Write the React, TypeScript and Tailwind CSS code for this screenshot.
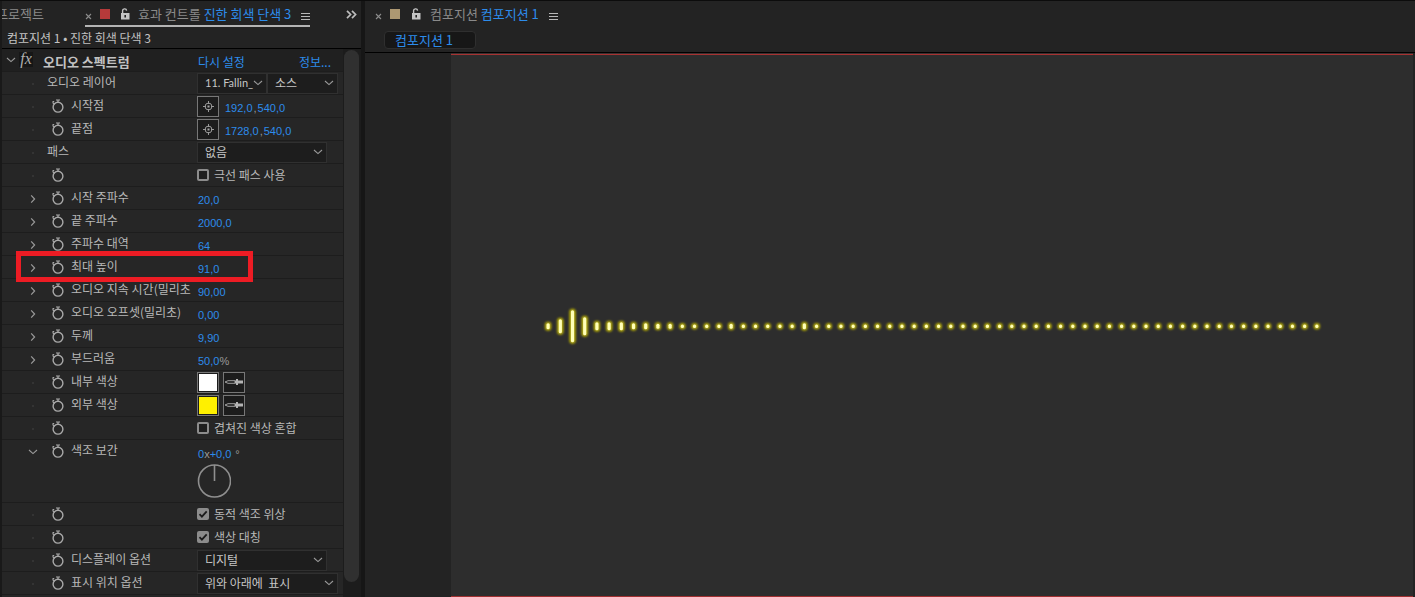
import { useId, useState, type ReactNode } from "react";

function Lock() {
  return (
    <svg viewBox="0 0 10 12" className="h-3 w-2.5" aria-hidden="true">
      <path d="M2.6 5.5V3.2A2 2 0 0 1 6.6 2.6" fill="none" stroke="#c4c4c4" strokeWidth="1.4" />
      <path fillRule="evenodd" d="M1 5h8.500v6.500H1zM4.400 7v2.600h1.600V7z" fill="#c4c4c4" />
    </svg>
  );
}

function MenuLines() {
  return (
    <svg viewBox="0 0 9 9" className="h-[9px] w-[9px]" aria-hidden="true">
      <path d="M0 1.5h9M0 4.5h9M0 7.5h9" stroke="#b8b8b8" />
    </svg>
  );
}

function Cross() {
  return (
    <svg viewBox="0 0 7 7" className="h-[7px] w-[7px]" aria-hidden="true">
      <path d="M1 1l5 5M6 1L1 6" stroke="#8c8c8c" strokeWidth="1.1" />
    </svg>
  );
}

function Stopwatch() {
  return (
    <svg viewBox="0 0 12 14" className="h-3.5 w-3" aria-hidden="true">
      <circle cx="6" cy="8.2" r="4.9" fill="none" stroke="#a9a9a9" strokeWidth="1.4" />
      <path d="M4 1h4M6 1v2.300" fill="none" stroke="#a9a9a9" strokeWidth="1.200" />
      <path d="M.6 2.500h1.600M1 2.500v1.500l1.500 1.200" fill="none" stroke="#a9a9a9" strokeWidth="1.100" />
    </svg>
  );
}

function Down({ className = "" }: { className?: string }) {
  return (
    <svg viewBox="0 0 10 6" className={`h-1.5 w-2.5 ${className}`} aria-hidden="true">
      <path d="M1 1l4 3.6L9 1" fill="none" stroke="#9a9a9a" strokeWidth="1.1" />
    </svg>
  );
}

function Right() {
  return (
    <svg viewBox="0 0 6 10" className="h-2.5 w-1.5" aria-hidden="true">
      <path d="M1.2 1.4L4.6 5L1.2 8.6" fill="none" stroke="#9a9a9a" strokeWidth="1.2" />
    </svg>
  );
}

function Target() {
  return (
    <svg viewBox="0 0 13 13" className="h-[13px] w-[13px]" aria-hidden="true">
      <circle cx="6.5" cy="6.5" r="3.4" fill="none" stroke="#9a9a9a" />
      <path d="M6.5 1v3M6.5 9v3M1 6.5h3M9 6.5h3" stroke="#9a9a9a" />
      <rect x="5.5" y="5.5" width="2" height="2" fill="#a8a8a8" />
    </svg>
  );
}

function Dropper() {
  return (
    <svg viewBox="0 0 20 8" className="h-2 w-5" aria-hidden="true">
      <path d="M1 4l3-1.300h7v2.600H4z" fill="#1c1c1c" stroke="#a0a0a0" />
      <path d="M11 2.500h1V1h2v1.500h5v3h-5V7h-2V5.500h-1z" fill="#b4b4b4" />
    </svg>
  );
}

function Picker({ label, options, className }: { label: string; options: string[]; className: string }) {
  return (
    <span className={`grid h-[21px] items-center ${className}`}>
      <select
        aria-label={label}
        className="col-start-1 row-start-1 h-full w-full appearance-none overflow-hidden border border-[#303030] bg-[#1d1d1d] pl-[7px] pr-3 text-[#c6c6c6] outline-none"
      >
        {options.map((o) => (
          <option key={o}>{o}</option>
        ))}
      </select>
      <Down className="pointer-events-none col-start-1 row-start-1 mr-1 justify-self-end" />
    </span>
  );
}

function Value({ children }: { children: ReactNode }) {
  return <button className="text-[#2d8ceb]">{children}</button>;
}

function Numbers({ children }: { children: ReactNode }) {
  return (
    <span className="flex pt-1 font-['Liberation_Sans',sans-serif] text-[11px] leading-4 text-[#9a9a9a]">{children}</span>
  );
}

function Check({ label, on = false }: { label: string; on?: boolean }) {
  const id = useId();
  const [checked, setChecked] = useState(on);
  return (
    <span className="flex items-center gap-[5px]">
      <span className="grid">
        <input
          id={id}
          type="checkbox"
          checked={checked}
          onChange={() => setChecked(!checked)}
          className="col-start-1 row-start-1 size-3 appearance-none rounded-xs border-2 border-[#8c8c8c] bg-[#1f1f1f] checked:bg-[#8c8c8c]"
        />
        {checked && (
          <svg viewBox="0 0 12 12" className="pointer-events-none col-start-1 row-start-1 size-3" aria-hidden="true">
            <path d="M2.500 6.200l2.400 2.500L9.700 3.300" fill="none" stroke="#1c1c1c" strokeWidth="1.800" />
          </svg>
        )}
      </span>
      <label htmlFor={id}>{label}</label>
    </span>
  );
}

function ColorPair({ name, swatch }: { name: string; swatch: string }) {
  return (
    <span className="flex gap-1">
      <button aria-label={name} className="h-[21px] w-[22px] border border-[#777] bg-[#1c1c1c] p-px">
        <span className={`block h-full ${swatch}`} />
      </button>
      <button
        aria-label={`${name} 스포이드`}
        className="flex h-[21px] w-[22px] items-center justify-center border border-[#777] bg-[#1c1c1c]"
      >
        <Dropper />
      </button>
    </span>
  );
}

type RowProps = {
  name?: string;
  twirl?: "open" | "closed";
  watch?: boolean;
  marked?: boolean;
  children: ReactNode;
};

function Row({ name, twirl, watch = true, marked = false, children }: RowProps) {
  return (
    <li className="relative flex border-b border-[#1d1d1d]">
      <div className="flex h-[22px] w-[195px] shrink-0 items-center overflow-hidden pl-5">
        <span className="flex w-6 shrink-0 justify-center pr-[3px] pt-0.5">
          {twirl === "closed" && (
            <button aria-label={`${name} 펼치기`}>
              <Right />
            </button>
          )}
          {twirl === "open" && (
            <button aria-label={`${name} 접기`}>
              <Down />
            </button>
          )}
          {!twirl && <span className="size-0.5 bg-[#343434]" />}
        </span>
        {watch && (
          <button aria-label="스톱워치" className="flex w-6 shrink-0 justify-center pr-px">
            <Stopwatch />
          </button>
        )}
        <span className="whitespace-nowrap pb-0.5 pl-px">{name}</span>
      </div>
      <div className="flex min-h-[22px] flex-1 items-center">{children}</div>
      {marked && <span className="pointer-events-none absolute -bottom-1 -top-[5px] left-3.5 w-[237px] border-[5px] border-[#ed1c24]" />}
    </li>
  );
}

function Point({ name, x, y }: { name: string; x: string; y: string }) {
  return (
    <Row name={name}>
      <button
        aria-label={`${name} 지정`}
        className="mr-1.5 flex h-[21px] w-[22px] items-center justify-center border border-[#777] bg-[#1c1c1c]"
      >
        <Target />
      </button>
      <Numbers>
        <Value>{x}</Value>
        <span className="px-px">,</span>
        <Value>{y}</Value>
      </Numbers>
    </Row>
  );
}

function Slider({ name, value, unit, marked }: { name: string; value: string; unit?: string; marked?: boolean }) {
  return (
    <Row name={name} twirl="closed" marked={marked}>
      <span className="pl-px">
        <Numbers>
          <Value>{value}</Value>
          {unit}
        </Numbers>
      </span>
    </Row>
  );
}

function EffectControls() {
  return (
    <section className="flex w-[361px] shrink-0 flex-col border-l-2 border-[#191919] bg-[#232323]">
      <header className="flex h-[26px] items-stretch text-[13px]">
        <button className="flex w-[42px] items-center justify-end overflow-hidden whitespace-nowrap text-[#8a8a8a]">
          프로젝트
        </button>
        <div className="ml-[41px] flex items-center whitespace-nowrap border-b-2 border-[#b4b4b4] pt-0.5">
          <button aria-label="닫기" className="pt-1">
            <Cross />
          </button>
          <span className="ml-2 size-2.5 bg-[#b53a3a]" />
          <button aria-label="잠금" className="ml-2.5">
            <Lock />
          </button>
          <h2 className="ml-2 text-[#8a8a8a]">
            효과 컨트롤 <span className="text-[#2d8ceb]">진한 회색 단색 3</span>
          </h2>
          <button aria-label="패널 메뉴" className="ml-2.5 pt-1">
            <MenuLines />
          </button>
        </div>
        <button aria-label="패널 더 보기" className="ml-auto mr-1">
          <svg viewBox="0 0 11 9" className="h-[9px] w-[11px]" aria-hidden="true">
            <path d="M1 .8l3.600 3.700L1 8.200M6 .8l3.600 3.700L6 8.200" fill="none" stroke="#bcbcbc" strokeWidth="1.700" />
          </svg>
        </button>
      </header>
      <p className="flex h-[22px] items-center border-b border-black pl-[5px] pt-px text-[#c2c2c2]">
        컴포지션 1 • 진한 회색 단색 3
      </p>
      <div className="flex flex-1">
        <div className="min-w-0 flex-1 bg-[#262626]">
          <div className="flex h-[23px] items-center border-b border-[#1d1d1d] bg-[#202020] pt-1">
            <div className="flex w-[196px] items-center">
              <button aria-label="접기" className="ml-1 pb-1">
                <Down />
              </button>
              <button
                aria-label="효과 사용"
                className="mb-1.5 ml-[3px] flex h-[15px] w-3.5 items-center justify-center bg-[#161616] font-['Liberation_Serif',serif] text-base italic text-[#b0b0b0]"
              >
                fx
              </button>
              <h3 className="ml-2.5 text-[13px] font-bold text-[#c2c2c2]">오디오 스펙트럼</h3>
            </div>
            <button className="text-[#2d8ceb]">다시 설정</button>
            <button className="ml-auto mr-3 text-[#2d8ceb]">정보...</button>
          </div>
          <ul className="leading-4">
            <Row name="오디오 레이어" watch={false}>
              <Picker
                label="오디오 레이어"
                options={["11. Fallin_"]}
                className="w-[70px] font-['Lato','Noto_Sans_CJK_KR',sans-serif] text-[11px]"
              />
              <Picker label="소스" options={["소스"]} className="w-[71px]" />
            </Row>
            <Point name="시작점" x="192,0" y="540,0" />
            <Point name="끝점" x="1728,0" y="540,0" />
            <Row name="패스" watch={false}>
              <Picker label="패스" options={["없음"]} className="w-[130px]" />
            </Row>
            <Row>
              <Check label="극선 패스 사용" />
            </Row>
            <Slider name="시작 주파수" value="20,0" />
            <Slider name="끝 주파수" value="2000,0" />
            <Slider name="주파수 대역" value="64" />
            <Slider name="최대 높이" value="91,0" marked />
            <Slider name="오디오 지속 시간(밀리초" value="90,00" />
            <Slider name="오디오 오프셋(밀리초)" value="0,00" />
            <Slider name="두께" value="9,90" />
            <Slider name="부드러움" value="50,0" unit="%" />
            <Row name="내부 색상">
              <ColorPair name="내부 색상" swatch="bg-white" />
            </Row>
            <Row name="외부 색상">
              <ColorPair name="외부 색상" swatch="bg-[#fff000]" />
            </Row>
            <Row>
              <Check label="겹쳐진 색상 혼합" />
            </Row>
            <Row name="색조 보간" twirl="open">
              <div className="flex flex-col pb-1">
                <span className="flex h-6 items-center pl-px">
                  <Numbers>
                    <Value>0</Value>x<Value>+0,0</Value>
                    <span className="pl-1">°</span>
                  </Numbers>
                </span>
                <svg viewBox="0 0 34 34" className="size-[34px]" role="img" aria-label="색조 각도">
                  <circle cx="17.500" cy="17" r="16" fill="none" stroke="#8f8f8f" strokeWidth="1.600" />
                  <path d="M17.500 1v16" stroke="#8f8f8f" strokeWidth="1.600" />
                </svg>
              </div>
            </Row>
            <Row>
              <Check label="동적 색조 위상" on />
            </Row>
            <Row>
              <Check label="색상 대칭" on />
            </Row>
            <Row name="디스플레이 옵션">
              <Picker label="디스플레이 옵션" options={["디지털"]} className="w-[130px]" />
            </Row>
            <Row name="표시 위치 옵션">
              <Picker label="표시 위치 옵션" options={["위와 아래에\u00a0 표시"]} className="w-[141px]" />
            </Row>
          </ul>
        </div>
        <div className="w-[18px] bg-[#1c1c1c] pb-[15px] pl-px pr-0.5 pt-px">
          <div className="h-full rounded-full bg-[#303030]" />
        </div>
      </div>
    </section>
  );
}

const bandCount = 64;
const tallBands: Record<number, number> = { 0: 9, 1: 17, 2: 35, 3: 21, 4: 11, 5: 11, 6: 11, 7: 9, 8: 9, 9: 8, 10: 8, 15: 8, 21: 9 };

function Spectrum() {
  return (
    <svg viewBox="0 0 961 540" className="h-full w-full" role="img" aria-label="오디오 스펙트럼">
      <defs>
        <filter id="halo" filterUnits="userSpaceOnUse" x="0" y="200" width="961" height="140">
          <feGaussianBlur stdDeviation="0.9" />
        </filter>
        <filter id="core" filterUnits="userSpaceOnUse" x="0" y="200" width="961" height="140">
          <feGaussianBlur stdDeviation="0.6" />
        </filter>
      </defs>
      {[
        { color: "#b8ae08", w: 6.4, grow: 0, filter: "url(#halo)" },
        { color: "#ffffb8", w: 3.2, grow: -3, filter: "url(#core)" },
      ].map((layer) => (
        <g key={layer.color} fill={layer.color} filter={layer.filter}>
          {Array.from({ length: bandCount }, (_, i) => {
            const h = (tallBands[i] ?? 6.6) + layer.grow;
            return (
              <rect
                key={i}
                x={97 + i * 12.19 - layer.w / 2}
                y={271 - h / 2}
                width={layer.w}
                height={h}
                rx={Math.min(layer.w, h) / 2}
              />
            );
          })}
        </g>
      ))}
    </svg>
  );
}

function Composition() {
  return (
    <section className="flex min-w-0 flex-1 flex-col bg-[#232323]">
      <header className="flex h-[26px] items-center whitespace-nowrap pl-2.5 text-[13px]">
        <button aria-label="닫기" className="pt-1">
          <Cross />
        </button>
        <span className="ml-2 size-2.5 bg-[#ad9872]" />
        <button aria-label="잠금" className="ml-[11px]">
          <Lock />
        </button>
        <h2 className="ml-[9px] text-[#8a8a8a]">
          컴포지션 <span className="text-[#2d8ceb]">컴포지션 1</span>
        </h2>
        <button aria-label="패널 메뉴" className="ml-2.5 pt-1">
          <MenuLines />
        </button>
      </header>
      <nav className="flex h-[26px] items-start border-b border-black pl-[19px] pt-1 text-[13px]">
        <a
          href="#comp"
          className="flex h-[18px] w-[92px] items-center rounded-sm border border-[#2f2f2f] bg-[#171717] pb-px pl-2.5 text-[#2d8ceb]"
        >
          컴포지션 1
        </a>
      </nav>
      <main className="flex min-h-0 flex-1 pl-[86px] pr-0.5">
        <div className="flex min-w-0 flex-1 flex-col bg-[#2d2d2d]">
          <div className="h-px bg-[#3a3030]" />
          <div className="h-px bg-[#a83232]" />
          <div className="min-h-0 flex-1">
            <Spectrum />
          </div>
          <div className="h-px bg-[#a03030]" />
        </div>
      </main>
    </section>
  );
}

export default function App() {
  return (
    <div className="flex min-h-screen gap-1 border-y border-[#0c0c0c] bg-[#161616] font-['Noto_Sans_CJK_KR',sans-serif] text-xs text-[#b8b8b8]">
      <EffectControls />
      <Composition />
    </div>
  );
}
